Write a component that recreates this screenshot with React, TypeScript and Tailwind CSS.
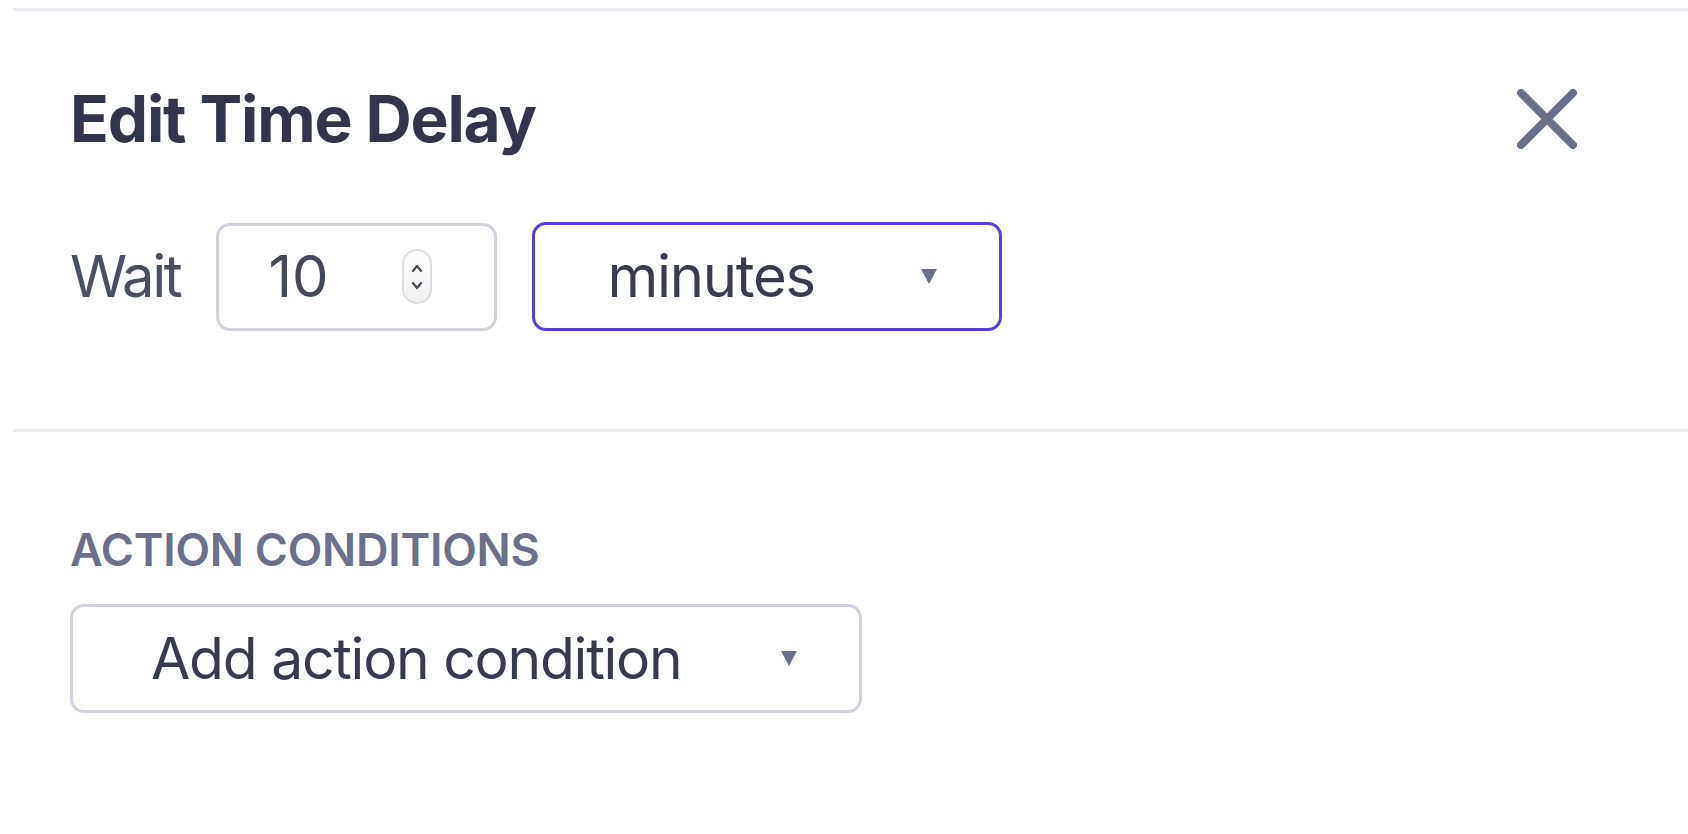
import React from 'react';

const Caret: React.FC = () => (
    <svg width="16" height="15" viewBox="0 0 16 15" className="shrink-0">
        <path d="M0 0 H16 L8 15 Z" fill="#6b7088" />
    </svg>
);

const App: React.FC = () => {
    return (
        <div className="min-h-screen bg-white" style={{ fontFamily: 'Inter, "Noto Sans", sans-serif' }}>
            <div className="ml-[13px] mt-[8px] border-t-[3px] border-[#ececf3]">
                {/* header */}
                <div className="flex items-center justify-between pl-[57px] pr-[111px] pt-[70px]">
                    <h2 className="text-[64px] leading-[76px] font-bold tracking-[-0.018em] text-[#33364a]">Edit Time Delay</h2>
                    <button aria-label="Close" className="w-[60px] h-[60px]">
                        <svg width="60" height="60" viewBox="0 0 60 60">
                            <path d="M4 4 L56 56 M56 4 L4 56" stroke="#6b7088" strokeWidth="8" strokeLinecap="round" />
                        </svg>
                    </button>
                </div>

                {/* wait row */}
                <div className="flex items-center pl-[57px] pt-[65px] pb-[98px]">
                    <span className="text-[58px] tracking-[-0.04em] text-[#4b4f62] mr-[35px]">Wait</span>
                    <div className="flex items-center w-[281px] h-[108px] rounded-[14px] border-[3px] border-[#d2d2de] pl-[50px] pr-[62px]">
                        <span className="text-[58px] text-[#444859] flex-1">10</span>
                        <div className="flex flex-col items-center justify-center w-[30px] h-[55px] rounded-full border-2 border-[#dcdce2] bg-gradient-to-b from-white to-[#f2f2f4]">
                            <svg width="14" height="38" viewBox="0 0 14 38">
                                <path d="M3 13 L7 8 L11 13" fill="none" stroke="#4a4a52" strokeWidth="2.2" strokeLinecap="round" strokeLinejoin="round" />
                                <path d="M3 25 L7 30 L11 25" fill="none" stroke="#4a4a52" strokeWidth="2.2" strokeLinecap="round" strokeLinejoin="round" />
                            </svg>
                        </div>
                    </div>
                    <div className="ml-[35px] flex items-center w-[470px] h-[109px] rounded-[14px] border-[3px] border-[#5b3fdc] pl-[73px] pr-[62px]">
                        <span className="text-[58px] tracking-[-0.022em] text-[#393c4e] flex-1">minutes</span>
                        <Caret />
                    </div>
                </div>

                <div className="border-t-[3px] border-[#ececf1]" />

                {/* action conditions */}
                <div className="pl-[57px] pt-[91px]">
                    <div className="text-[45px] leading-[54px] font-semibold tracking-[-0.005em] text-[#6c7189]">ACTION CONDITIONS</div>
                    <div className="mt-[27px] flex items-center w-[792px] h-[109px] rounded-[14px] border-[3px] border-[#d2d2de] pl-[78px] pr-[62px]">
                        <span className="text-[57px] tracking-[-0.022em] text-[#383b4d] flex-1">Add action condition</span>
                        <Caret />
                    </div>
                </div>
            </div>
        </div>
    );
};

export default App;
